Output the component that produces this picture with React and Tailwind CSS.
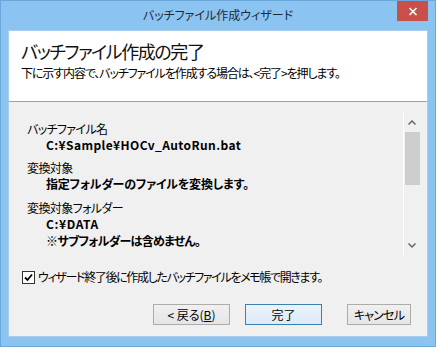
import React from "react";

const jp = "font-['Noto_Sans_CJK_JP','Noto_Sans',sans-serif] [font-feature-settings:'palt']";

function Btn({ children, def, w }) {
  return (
    <div
      className={`h-[21px] flex items-center justify-center text-[12px] leading-none text-black border ${
        def ? "border-[#3c7fb1] bg-[linear-gradient(#eaf3fb,#dcebf8)]" : "border-[#acacac] bg-[linear-gradient(#f0f0f0,#e5e5e5)]"
      } ${w}`}
    >
      {children}
    </div>
  );
}

export default function App() {
  return (
    <div className={`w-[436px] h-[347px] bg-[#8cc4f1] border border-[#6aa8dc] flex flex-col relative ${jp}`}>
      {/* title bar */}
      <div className="h-[29px] flex items-center justify-center text-[12px] text-[#1e2a38] pb-[1px]">
        バッチファイル作成ウィザード
      </div>
      <div className="absolute top-0 right-[7px] w-[31px] h-[20px] bg-[#c9504a] flex items-center justify-center">
        <svg width="10" height="9" viewBox="0 0 10 9">
          <path d="M1.5 1 L8.5 8 M8.5 1 L1.5 8" stroke="#fff" strokeWidth="1.6" />
        </svg>
      </div>

      {/* client */}
      <div className="mx-[7px] mb-[9px] flex-1 flex flex-col bg-[#f0f0f0] border border-[#a9cdec]">
        {/* header */}
        <div className="h-[71px] bg-white border-b border-[#a0a0a0] pl-[12px] pt-[8px] flex flex-col">
          <div className="text-[18px] leading-[24px] text-[#111] tracking-[-1.4px]">バッチファイル作成の完了</div>
          <div className="mt-[2px] text-[12px] leading-[16px] text-black tracking-[-1.1px]">
            下に示す内容で、バッチファイルを作成する場合は、&lt;完了&gt;を押します。
          </div>
        </div>

        {/* list */}
        <div className="mt-[10px] ml-[11px] mr-[7px] h-[143px] flex">
          <div className="flex-1 pl-[7px] pt-[9px] text-[12px] leading-[16px] text-black">
            <div className="tracking-[-0.6px]">バッチファイル名</div>
            <div className="pl-[19px] font-bold tracking-[0.4px]">C:¥Sample¥HOCv_AutoRun.bat</div>
            <div className="mt-[7px] tracking-[-0.6px]">変換対象</div>
            <div className="pl-[19px] font-bold tracking-[-0.2px]">指定フォルダーのファイルを変換します。</div>
            <div className="mt-[8px] tracking-[-0.6px]">変換対象フォルダー</div>
            <div className="pl-[19px] font-bold tracking-[0.6px]">C:¥DATA</div>
            <div className="pl-[19px] font-bold mt-[1px] tracking-[-0.7px]">※サブフォルダーは含めません。</div>
          </div>
          <div className="w-[17px] border-l border-white flex flex-col items-center">
            <div className="h-[20px] flex items-center justify-center">
              <svg width="8" height="5" viewBox="0 0 8 5">
                <path d="M0.5 4.5 L4 1 L7.5 4.5" stroke="#606060" strokeWidth="1.4" fill="none" />
              </svg>
            </div>
            <div className="w-[15px] h-[53px] bg-[#cdcdcd]" />
            <div className="flex-1" />
            <div className="h-[20px] flex items-center justify-center">
              <svg width="8" height="5" viewBox="0 0 8 5">
                <path d="M0.5 0.5 L4 4 L7.5 0.5" stroke="#606060" strokeWidth="1.4" fill="none" />
              </svg>
            </div>
          </div>
        </div>

        {/* checkbox */}
        <div className="mt-[14px] ml-[13px] flex items-center h-[16px]">
          <div className="w-[13px] h-[13px] border border-[#333] bg-white flex items-center justify-center">
            <svg width="9" height="9" viewBox="0 0 9 9">
              <path d="M1 4.5 L3.5 7 L8 1.5" stroke="#000" strokeWidth="1.8" fill="none" />
            </svg>
          </div>
          <div className="ml-[3px] text-[12px] leading-[16px] text-black tracking-[-1.35px]">
            ウィザード終了後に作成したバッチファイルをメモ帳で開きます。
          </div>
        </div>

        {/* buttons */}
        <div className="mt-[19px] flex justify-end pr-[16px]">
          <Btn w="w-[77px]">&lt;&nbsp;戻る(<span className="underline">B</span>)</Btn>
          <div className="w-[15px]" />
          <Btn def w="w-[77px]">完了</Btn>
          <div className="w-[25px]" />
          <Btn w="w-[64px]"><span className="tracking-[-0.8px]">キャンセル</span></Btn>
        </div>
      </div>
    </div>
  );
}
